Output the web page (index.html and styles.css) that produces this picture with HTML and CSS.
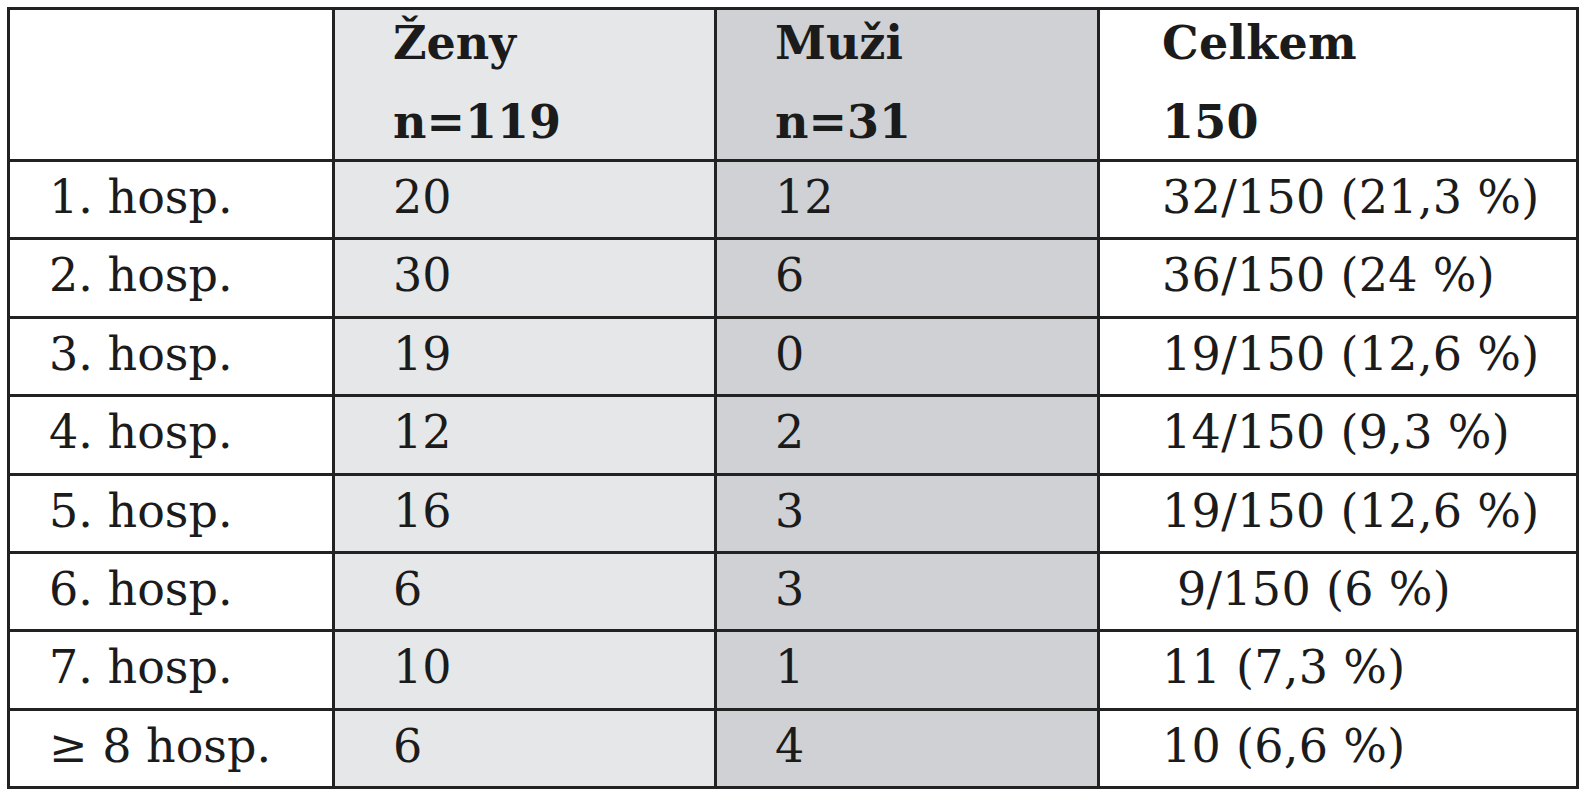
FILE: index.html
```html
<!DOCTYPE html>
<html lang="cs">
<head>
<meta charset="utf-8">
<title>Hospitalizace</title>
<link rel="stylesheet" href="styles.css">
</head>
<body>
<div class="grid">
  <div class="cell c1 head"></div>
  <div class="cell c2 head"><div class="hd">Ženy<br>n=119</div></div>
  <div class="cell c3 head"><div class="hd">Muži<br>n=31</div></div>
  <div class="cell c4 head"><div class="hd">Celkem<br>150</div></div>

  <div class="cell c1">1. hosp.</div><div class="cell c2">20</div><div class="cell c3">12</div><div class="cell c4">32/150 (21,3 %)</div>
  <div class="cell c1">2. hosp.</div><div class="cell c2">30</div><div class="cell c3">6</div><div class="cell c4">36/150 (24 %)</div>
  <div class="cell c1">3. hosp.</div><div class="cell c2">19</div><div class="cell c3">0</div><div class="cell c4">19/150 (12,6 %)</div>
  <div class="cell c1">4. hosp.</div><div class="cell c2">12</div><div class="cell c3">2</div><div class="cell c4">14/150 (9,3 %)</div>
  <div class="cell c1">5. hosp.</div><div class="cell c2">16</div><div class="cell c3">3</div><div class="cell c4">19/150 (12,6 %)</div>
  <div class="cell c1">6. hosp.</div><div class="cell c2">6</div><div class="cell c3">3</div><div class="cell c4"> 9/150 (6 %)</div>
  <div class="cell c1">7. hosp.</div><div class="cell c2">10</div><div class="cell c3">1</div><div class="cell c4">11 (7,3 %)</div>
  <div class="cell c1">≥ 8 hosp.</div><div class="cell c2">6</div><div class="cell c3">4</div><div class="cell c4">10 (6,6 %)</div>
</div>
</body>
</html>
```
FILE: styles.css
```css
html, body {
  margin: 0;
  padding: 0;
  background: #ffffff;
}
body {
  padding: 7px 0 0 7px;
  font-family: "DejaVu Serif", "Liberation Serif", serif;
  color: #1b1b1b;
}
.grid {
  display: grid;
  width: max-content;
  grid-template-columns: 322px 379px 380px 476px;
  grid-template-rows: 149px repeat(8, 75.4px);
  gap: 3px;
  padding: 3px;
  background: #222222;
}
.cell {
  font-size: 46px;
  line-height: 70px;
  white-space: pre;
  overflow: hidden;
  padding-left: 58px;
}
.c1 { background: #ffffff; padding-left: 39px; }
.c2 { background: #e6e7e9; }
.c3 { background: #d0d1d5; }
.c4 { background: #ffffff; padding-left: 62px; letter-spacing: 0.3px; }
.head {
  font-weight: bold;
}
.hd {
  line-height: 79px;
  margin-top: -6px;
}
```
